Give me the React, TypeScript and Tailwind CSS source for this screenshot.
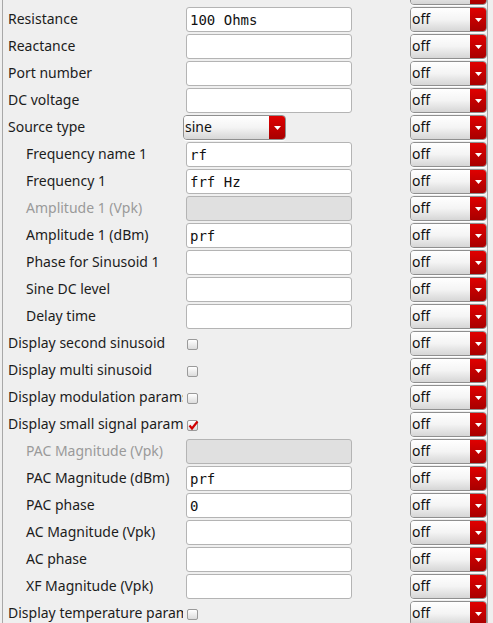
import React from "react";

type Row =
  | { kind: "none" }
  | { kind: "input"; label: string; value?: string; indent?: boolean; disabled?: boolean }
  | { kind: "select"; label: string; value: string }
  | { kind: "check"; label: string; checked?: boolean };

const rows: Row[] = [
  { kind: "none" },
  { kind: "input", label: "Resistance", value: "100 Ohms" },
  { kind: "input", label: "Reactance" },
  { kind: "input", label: "Port number" },
  { kind: "input", label: "DC voltage" },
  { kind: "select", label: "Source type", value: "sine" },
  { kind: "input", label: "Frequency name 1", value: "rf", indent: true },
  { kind: "input", label: "Frequency 1", value: "frf Hz", indent: true },
  { kind: "input", label: "Amplitude 1 (Vpk)", indent: true, disabled: true },
  { kind: "input", label: "Amplitude 1 (dBm)", value: "prf", indent: true },
  { kind: "input", label: "Phase for Sinusoid 1", indent: true },
  { kind: "input", label: "Sine DC level", indent: true },
  { kind: "input", label: "Delay time", indent: true },
  { kind: "check", label: "Display second sinusoid" },
  { kind: "check", label: "Display multi sinusoid" },
  { kind: "check", label: "Display modulation params" },
  { kind: "check", label: "Display small signal params", checked: true },
  { kind: "input", label: "PAC Magnitude (Vpk)", indent: true, disabled: true },
  { kind: "input", label: "PAC Magnitude (dBm)", value: "prf", indent: true },
  { kind: "input", label: "PAC phase", value: "0", indent: true },
  { kind: "input", label: "AC Magnitude (Vpk)", indent: true },
  { kind: "input", label: "AC phase", indent: true },
  { kind: "input", label: "XF Magnitude (Vpk)", indent: true },
  { kind: "check", label: "Display temperature params" },
];

function Arrow() {
  return (
    <svg width="7" height="4" viewBox="0 0 7 4">
      <polygon points="0,0 7,0 3.5,4" fill="#ffffff" />
    </svg>
  );
}

function Dropdown({ value, width }: { value: string; width: string }) {
  return (
    <div
      className={`${width} h-[25px] flex rounded-[4px] border border-[#8f8f8f] overflow-hidden shadow-[0_1px_0_#ffffff]`}
    >
      <div className="flex-1 flex items-center pl-[1px] pb-[1px] bg-gradient-to-b from-[#ffffff] via-[#f4f4f4] to-[#d6d6d6] text-[14px] text-[#111111] leading-[20px]">
        {value}
      </div>
      <div className="w-[16px] flex items-center justify-center bg-gradient-to-b from-[#e00000] to-[#a80000]">
        <Arrow />
      </div>
    </div>
  );
}

function Checkbox({ checked }: { checked?: boolean }) {
  return (
    <div className="ml-[4px] mt-[1px] w-[11px] h-[11px] rounded-[2px] border border-[#9a9a9a] bg-gradient-to-b from-[#ffffff] to-[#dcdcdc] relative">
      {checked && (
        <svg className="absolute left-[0px] top-[-1px]" width="11" height="11" viewBox="0 0 11 11">
          <path d="M1.5 5.5 L4 8.5 L9.5 1.5" stroke="#d00000" strokeWidth="2.2" fill="none" />
        </svg>
      )}
    </div>
  );
}

export default function App() {
  return (
    <div
      className="w-[493px] h-[623px] overflow-hidden bg-[#efefef] text-[#1c1c1c]"
      style={{ fontFamily: '"Noto Sans", "Open Sans", sans-serif' }}
    >
      <div className="ml-[2px] w-[486px] h-[623px] border-l border-r border-[#a8a8a8] overflow-hidden">
        <div className="mt-[-21px] flex flex-col">
          {rows.map((r, i) => (
            <div key={i} className="h-[27px] flex items-center shrink-0">
              <div
                className={`w-[180px] shrink-0 overflow-hidden whitespace-nowrap text-[14px] leading-[20px] pb-[2px] ${
                  r.kind === "input" && r.indent ? "pl-[23px]" : "pl-[5px]"
                } ${r.kind === "input" && r.disabled ? "text-[#9a9a9a]" : ""}`}
              >
                {r.kind !== "none" ? r.label : ""}
              </div>
              <div className="w-[227px] shrink-0 flex items-center">
                {r.kind === "input" && (
                  <div
                    className={`ml-[3px] w-[166px] h-[25px] rounded-[3px] border border-[#b4b4b4] flex items-center pl-[3px] text-[14px] text-[#111111] leading-[20px] ${
                      r.disabled ? "bg-[#e0e0e0]" : "bg-white"
                    }`}
                    style={{ fontFamily: '"DejaVu Sans Mono", monospace' }}
                  >
                    {r.value ?? ""}
                  </div>
                )}
                {r.kind === "select" && <Dropdown value={r.value} width="w-[103px]" />}
                {r.kind === "check" && <Checkbox checked={r.checked} />}
              </div>
              <Dropdown value="off" width="w-[77px]" />
            </div>
          ))}
        </div>
      </div>
    </div>
  );
}
